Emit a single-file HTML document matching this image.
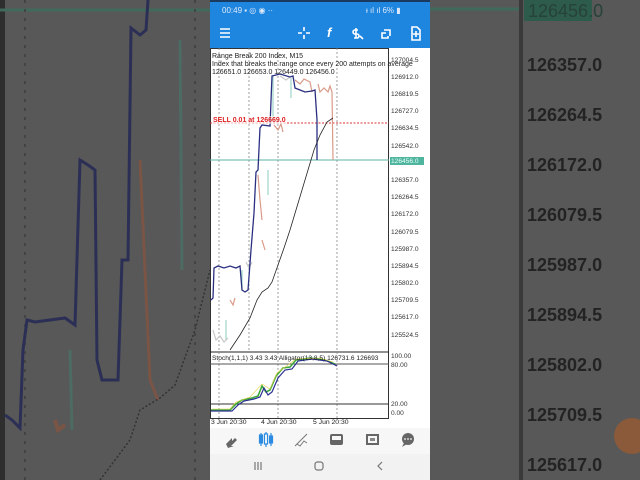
<!DOCTYPE html>
<html><head><meta charset="utf-8"><style>
html,body{margin:0;padding:0;width:640px;height:480px;overflow:hidden;background:#5a5a5a}
svg{display:block}
text{font-family:"Liberation Sans",sans-serif}
</style></head><body>
<svg width="640" height="480" viewBox="0 0 640 480">
<rect x="0" y="0" width="210" height="480" fill="#585858"/>
<rect x="0" y="0" width="5" height="480" fill="#2e2e2e"/>
<line x1="0" y1="10" x2="210" y2="10" stroke="#3f6a5c" stroke-width="3"/>
<line x1="25" y1="0" x2="25" y2="480" stroke="#444" stroke-width="2" stroke-dasharray="3,6"/>
<line x1="195" y1="0" x2="195" y2="480" stroke="#444" stroke-width="2" stroke-dasharray="3,6"/>
<polyline points="5,415 12,420 20,428 23,350 27,320 35,322 50,320 65,318 75,325 80,160 88,165 95,170 97,360 102,380 110,380 118,380 122,260 128,260 131,28 140,35 146,30 148,0" fill="none" stroke="#2c2f55" stroke-width="3"/>
<polyline points="180,40 182,270" stroke="#4c6b62" stroke-width="3" fill="none"/>
<polyline points="140,160 150,380 158,400" stroke="#7a5546" stroke-width="3" fill="none"/>
<polyline points="70,350 72,430" stroke="#4c6b62" stroke-width="3" fill="none"/>
<polyline points="55,420 58,430 65,425" stroke="#7a5546" stroke-width="4" fill="none"/>
<polyline points="100,480 130,440 140,410 160,398 175,385 195,330 210,270" fill="none" stroke="#333" stroke-width="1.5" stroke-dasharray="2,2"/>
<rect x="430" y="0" width="210" height="480" fill="#585858"/>
<line x1="430" y1="9" x2="520" y2="9" stroke="#3f6a5c" stroke-width="3"/>
<rect x="519" y="0" width="4" height="480" fill="#3a3a3a"/>
<rect x="524" y="0" width="68" height="21" fill="#2d5c4c"/>
<text x="528" y="17" font-size="18" fill="#274236">126456.0</text>
<g font-size="18" fill="#232323" font-weight="bold">
<text x="527" y="71">126357.0</text><text x="527" y="121">126264.5</text><text x="527" y="171">126172.0</text><text x="527" y="221">126079.5</text><text x="527" y="271">125987.0</text><text x="527" y="321">125894.5</text><text x="527" y="371">125802.0</text><text x="527" y="421">125709.5</text><text x="527" y="471">125617.0</text>
</g>
<circle cx="632" cy="436" r="18" fill="#8a5a3a"/>
<rect x="210" y="0" width="220" height="480" fill="#ffffff"/>
<rect x="210" y="0" width="220" height="48" fill="#1f86e0"/>
<rect x="210" y="0" width="220" height="2" fill="#1a3a60"/>
<text x="222" y="13" font-size="8" fill="#dce9fb">00:49 ▪ ◎ ◉ ··</text>
<text x="366" y="13" font-size="8" fill="#dce9fb">ᵻ ıl ıl 6% ▮</text>
<g stroke="#fff" stroke-width="1.6" fill="none">
<path d="M220 29h10M220 33h10M220 37h10"/>
<path d="M304 27v4M304 35v4M298 33h4M306 33h4"/>
<path d="M384 30h6v6M386 33h-4v5h6v-2"/>
<path d="M412 27h5l3 3v10h-8z M416 31v6M413 34h6"/>
<path d="M356 28v10M358 30h-3a2 2 0 0 0 0 4h2a2 2 0 0 1 0 4h-3M360 36l3 3"/>
</g>
<text x="327" y="37" font-size="13" font-style="italic" font-weight="bold" fill="#fff" font-family="Liberation Serif">f</text>
<rect x="210.5" y="48.5" width="178" height="370" fill="none" stroke="#333" stroke-width="1"/>
<line x1="210" y1="352" x2="389" y2="352" stroke="#222"/>
<g stroke="#888" stroke-dasharray="2,2" stroke-width="0.8">
<line x1="219" y1="48" x2="219" y2="418"/><line x1="278" y1="48" x2="278" y2="418"/><line x1="337" y1="48" x2="337" y2="418"/><line x1="249" y1="48" x2="249" y2="352"/>
</g>
<line x1="210" y1="123" x2="389" y2="123" stroke="#d33" stroke-dasharray="2,1.5"/>
<line x1="210" y1="160" x2="389" y2="160" stroke="#5bb7a5"/>
<g stroke="#d99a88" stroke-width="1.2" fill="none">
<polyline points="295,80 300,84 304,79 310,82 312,92"/>
<polyline points="318,84 320,92 324,88 328,92 330,86 332,92 333,160"/>
<polyline points="274,125 278,130 281,124 283,132"/>
<polyline points="258,175 260,200 262,220"/>
<polyline points="230,300 233,305 235,298"/>
<polyline points="262,240 265,250"/>
</g>
<g stroke="#9ed6c8" stroke-width="1.2" fill="none">
<line x1="226" y1="320" x2="226" y2="340"/>
<line x1="268" y1="170" x2="268" y2="195"/>
<line x1="273" y1="76" x2="273" y2="122"/>
<line x1="291" y1="78" x2="291" y2="98"/>
<line x1="242" y1="270" x2="242" y2="290"/>
</g>
<g stroke="#c8c8c8" stroke-width="1.2" fill="none">
<polyline points="213,330 216,340 220,336 224,342 228,338"/>
<polyline points="280,76 286,80 290,77"/>
<polyline points="246,262 249,268 252,262"/>
</g>
<polyline points="211,300 213,298 214,268 218,266 224,268 230,266 236,268 240,266 242,290 245,292 248,290 251,250 254,213 256,172 258,170 260,128 262,125 270,126 272,76 280,74 290,77 293,76 295,88 300,90 305,92 312,91 315,90 317,120 317,160" fill="none" stroke="#2a2f80" stroke-width="1.3"/>
<polyline points="230,350 240,335 250,318 257,300 262,292 268,288 272,282 278,265 284,248 290,230 296,210 302,190 308,170 314,150 320,135 327,122 333,118" fill="none" stroke="#222" stroke-width="0.8"/>
<rect x="213" y="116" width="74" height="8" fill="#fff" opacity="0.6"/>
<text x="213" y="122" font-size="7" font-weight="bold" fill="#d22">SELL 0.01 at 126669.0</text>
<g font-size="7" fill="#222">
<text x="212" y="58">Range Break 200 Index, M15</text>
<text x="212" y="66">Index that breaks the range once every 200 attempts on average</text>
<text x="212" y="74">126651.0 126653.0 126449.0 126456.0</text>
</g>
<g font-size="6.6" fill="#333">
<text x="391" y="62">127004.5</text><text x="391" y="79">126912.0</text><text x="391" y="96">126819.5</text><text x="391" y="113">126727.0</text><text x="391" y="130">126634.5</text><text x="391" y="148">126542.0</text>
<text x="391" y="182">126357.0</text><text x="391" y="199">126264.5</text><text x="391" y="216">126172.0</text><text x="391" y="234">126079.5</text><text x="391" y="251">125987.0</text><text x="391" y="268">125894.5</text><text x="391" y="285">125802.0</text><text x="391" y="302">125709.5</text><text x="391" y="319">125617.0</text><text x="391" y="337">125524.5</text>
<text x="391" y="358">100.00</text><text x="391" y="367">80.00</text><text x="391" y="406">20.00</text><text x="391" y="415">0.00</text>
</g>
<rect x="390" y="157" width="34" height="8" fill="#4fb59e"/>
<text x="391" y="163" font-size="6.6" fill="#e8fff8">126456.0</text>
<line x1="210" y1="364" x2="389" y2="364" stroke="#555"/>
<line x1="210" y1="404" x2="389" y2="404" stroke="#333"/>
<polyline points="211,410 230,410 236,404 242,400 252,398 258,396 262,386 266,392 270,390 276,376 283,368 290,367 296,360 310,358 325,360 335,364" fill="none" stroke="#3da83a" stroke-width="1.6"/>
<polyline points="211,411 232,411 238,405 244,401 254,399 260,397 264,388 268,395 272,392 278,378 285,370 292,369 298,361 312,359 327,361 337,366" fill="none" stroke="#2a2f90" stroke-width="1.2"/>
<polyline points="212,409 230,409 236,402 250,397 262,384 270,389 277,373 296,359 320,358 333,362" fill="none" stroke="#e8d040" stroke-width="0.6"/>
<text x="212" y="360" font-size="6.6" fill="#222">Stoch(1,1,1) 3.43 3.43 Alligator(13,8,5) 126731.6 126693</text>
<g font-size="6.8" fill="#222">
<text x="211" y="424">3 Jun 20:30</text><text x="261" y="424">4 Jun 20:30</text><text x="313" y="424">5 Jun 20:30</text>
</g>
<rect x="210" y="428" width="220" height="26" fill="#f7f7f7"/>
<g fill="#666">
<path d="M226 444l6-6v3l3-3 2 2-6 6h3l-6 2z"/>
<rect x="330" y="434" width="13" height="11" rx="2"/>
<rect x="366" y="434" width="13" height="11"/>
<circle cx="408" cy="439" r="6"/>
<path d="M404 443l-2 4 5-3z"/>
</g>
<rect x="368" y="436" width="9" height="7" fill="#f7f7f7"/>
<rect x="370" y="438" width="5" height="3" fill="#888"/>
<rect x="332" y="436" width="9" height="4" fill="#f7f7f7"/>
<g fill="#f7f7f7"><circle cx="405" cy="439" r="0.9"/><circle cx="408" cy="439" r="0.9"/><circle cx="411" cy="439" r="0.9"/></g>
<g stroke="#2b8be0" stroke-width="1.2" fill="#2b8be0">
<line x1="261" y1="433" x2="261" y2="446"/><rect x="259.5" y="435" width="3" height="8"/>
<line x1="266" y1="432" x2="266" y2="447"/><rect x="264.5" y="434" width="3" height="10" fill="#fff"/>
<line x1="271" y1="433" x2="271" y2="446"/><rect x="269.5" y="436" width="3" height="7"/>
</g>
<path d="M295 446l12-12M297 444l3 2 4-5 3 2" stroke="#777" stroke-width="1" fill="none"/>
<rect x="210" y="454" width="220" height="26" fill="#f2f2f2"/>
<g stroke="#777" stroke-width="1.2" fill="none">
<path d="M255 462v8M258 462v8M261 462v8"/>
<rect x="315" y="462" width="8" height="8" rx="2.5"/>
<path d="M382 462l-4 4 4 4"/>
</g>
</svg>
</body></html>
